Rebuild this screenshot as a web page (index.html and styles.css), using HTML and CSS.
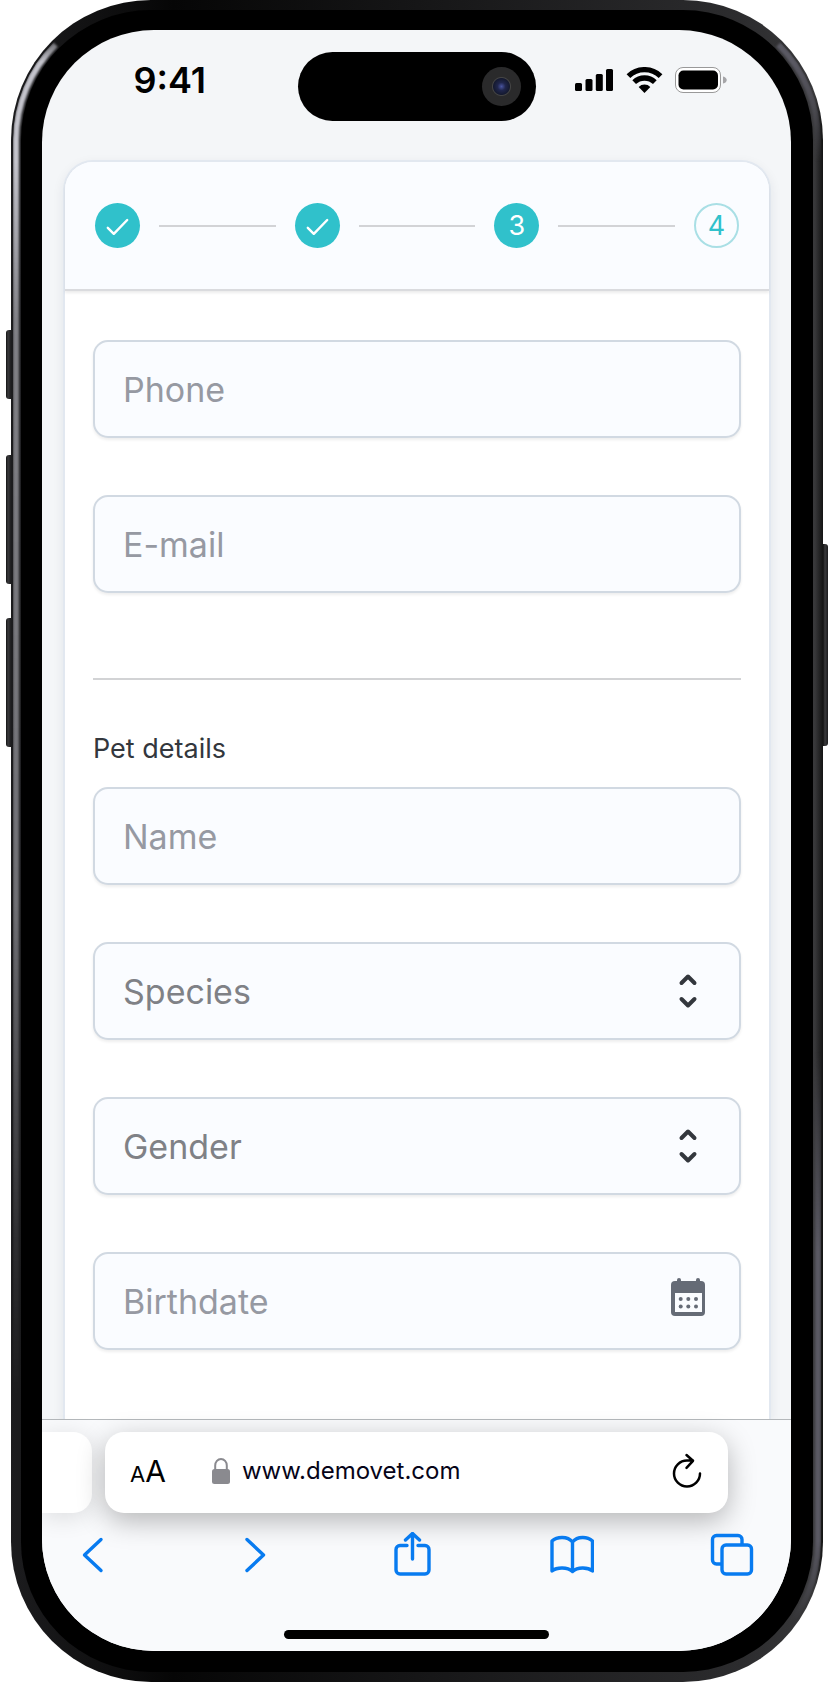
FILE: index.html
```html
<!DOCTYPE html>
<html lang="en">

<head>
  <meta charset="UTF-8">
  <meta name="viewport" content="width=device-width, initial-scale=1.0">
  <title>Demovet booking</title>
  <link rel="stylesheet" href="styles.css">
</head>

<body>
  <div class="phone">
    <span class="side-button action"></span>
    <span class="side-button volume-up"></span>
    <span class="side-button volume-down"></span>
    <span class="side-button power"></span>

    <div class="bezel">
      <div class="screen">
        <header class="status-bar">
          <div class="time">9:41</div>
          <div class="island"><span class="camera"></span></div>
          <div class="status-icons">
            <svg width="39" height="26" viewBox="0 0 39 26">
              <rect x="0" y="16" width="7" height="8" rx="1.5" />
              <rect x="10.5" y="12" width="7" height="12" rx="1.5" />
              <rect x="20.8" y="7" width="7" height="17" rx="1.5" />
              <rect x="31" y="2" width="7" height="22" rx="1.5" />
            </svg>
            <svg width="37" height="26" viewBox="639 201 111 78">
              <g fill="none" stroke="#000" stroke-width="16">
                <path d="M646.3 228.2A70 70 0 0 1 742.7 228.2" />
                <path d="M663.5 246.4A45 45 0 0 1 725.5 246.4" />
              </g>
              <path d="M694.5 279L677 261A25 25 0 0 1 712 261Z" />
            </svg>
            <svg width="52" height="26" viewBox="0 0 52 26">
              <rect x="0.5" y="0.5" width="45" height="25" rx="7.5" fill="#fff" stroke="#999" />
              <rect x="3.5" y="3.5" width="39.5" height="19" rx="5" />
              <path d="M48 9.5c5 1 5 6 0 7z" fill="#a5a5a8" />
            </svg>
          </div>
        </header>

        <main class="card">
          <ol class="steps">
            <li class="step done">
              <svg width="45" height="45" viewBox="0 0 45 45"><path d="M12.8 24.8l6 6L32.2 17" /></svg>
            </li>
            <li class="step-line"></li>
            <li class="step done">
              <svg width="45" height="45" viewBox="0 0 45 45"><path d="M12.8 24.8l6 6L32.2 17" /></svg>
            </li>
            <li class="step-line"></li>
            <li class="step done">3</li>
            <li class="step-line"></li>
            <li class="step">4</li>
          </ol>

          <form class="form">
            <div class="group">
              <input class="control" type="tel" placeholder="Phone" aria-label="Phone">
              <input class="control" type="email" placeholder="E-mail" aria-label="E-mail">
            </div>

            <hr>
            <h2>Pet details</h2>

            <div class="group">
              <input class="control" type="text" placeholder="Name" aria-label="Name">

              <div class="field">
                <select class="control" aria-label="Species">
                  <option>Species</option>
                  <option>Dog</option>
                  <option>Cat</option>
                </select>
                <svg class="field-icon chevrons" width="40" height="40" viewBox="0 0 40 40">
                  <path d="M13.5 12l6.5-6.5 6.5 6.5M13.5 28l6.5 6.5 6.5-6.5" />
                </svg>
              </div>

              <div class="field">
                <select class="control" aria-label="Gender">
                  <option>Gender</option>
                  <option>Female</option>
                  <option>Male</option>
                </select>
                <svg class="field-icon chevrons" width="40" height="40" viewBox="0 0 40 40">
                  <path d="M13.5 12l6.5-6.5 6.5 6.5M13.5 28l6.5 6.5 6.5-6.5" />
                </svg>
              </div>

              <div class="field">
                <input class="control" type="text" placeholder="Birthdate" aria-label="Birthdate">
                <svg class="field-icon" width="40" height="46" viewBox="0 0 40 46" fill="#656b76">
                  <rect x="9" y="0" width="4" height="8" rx="2" />
                  <rect x="28" y="0" width="4" height="8" rx="2" />
                  <rect x="3" y="3" width="34" height="35" rx="4" />
                  <rect x="7" y="15" width="27" height="19" fill="#fafcff" />
                  <circle cx="12.7" cy="21" r="2" />
                  <circle cx="20.3" cy="21" r="2" />
                  <circle cx="28" cy="21" r="2" />
                  <circle cx="12.7" cy="28.5" r="2" />
                  <circle cx="20.3" cy="28.5" r="2" />
                  <circle cx="28" cy="28.5" r="2" />
                </svg>
              </div>
            </div>
          </form>
        </main>

        <footer class="browser">
          <div class="tabs">
            <div class="tab-previous"></div>
            <div class="address">
              <button class="text-size" type="button"><small>A</small>A</button>
              <svg class="lock" width="18" height="26" viewBox="0 0 18 26">
                <path d="M3.2 12V7.5a5.8 6.5 0 0 1 11.6 0V12" fill="none" stroke="#8a8a8f" stroke-width="2" />
                <rect x="0" y="11" width="18" height="15" rx="2.5" fill="#8a8a8f" />
              </svg>
              <a class="url" href="#">www.demovet.com</a>
              <button class="reload" type="button" aria-label="Reload">
                <svg width="30" height="36" viewBox="0 0 30 36">
                  <path d="M28 20.5a13 13 0 1 1-13-13h6M14.5 2l6.5 5.8-6.5 7" />
                </svg>
              </button>
            </div>
          </div>

          <nav class="toolbar">
            <button type="button" aria-label="Back">
              <svg width="44" height="46" viewBox="0 0 44 46"><path d="M31 7.5L14.5 23 31 38.5" /></svg>
            </button>
            <button type="button" aria-label="Forward">
              <svg width="44" height="46" viewBox="0 0 44 46"><path d="M17 7.5L33.5 23 17 38.5" /></svg>
            </button>
            <button type="button" aria-label="Share">
              <svg width="44" height="46" viewBox="0 0 44 46">
                <path d="M17 13.5H10a4 4 0 0 0-4 4V38a4 4 0 0 0 4 4h25a4 4 0 0 0 4-4V17.5a4 4 0 0 0-4-4h-7M22.500 27V1.500M15.500 8l7-6.500 7 6.500" />
              </svg>
            </button>
            <button type="button" aria-label="Bookmarks">
              <svg width="44" height="46" viewBox="0 0 44 46">
                <path d="M22.500 10C17.500 4 7 4.500 2 9V39c5-4 15.500-4 20.500.5V10c5-6 15-5.500 20-1V39c-5-4-15-4-20 .5" />
              </svg>
            </button>
            <button type="button" aria-label="Tabs">
              <svg width="44" height="46" viewBox="0 0 44 46">
                <path d="M11 32H6.500a4 4 0 0 1-4-4V7.500a4 4 0 0 1 4-4H28a4 4 0 0 1 4 4V12" />
                <rect x="12" y="13" width="29.500" height="29" rx="4" />
              </svg>
            </button>
          </nav>
          <div class="home-indicator"></div>
        </footer>
      </div>
    </div>
  </div>
</body>

</html>
```
FILE: styles.css
```css
:root {
  --teal: #30c1cb;
  --blue: #087bf0;
  --page-bg: #f4f6f8;
  --control-bg: #fafcff;
  --control-border: #d1d9e2;
  --text-color: #33373d;
}

* {
  box-sizing: border-box;
}

body {
  margin: 0;
  background: #fff;
  color: var(--text-color);
  font-family: Inter, "Liberation Sans", sans-serif;
}

button {
  border: none;
  padding: 0;
  background: none;
  color: inherit;
  font: inherit;
  cursor: pointer;
}

svg {
  display: block;
}

/* Phone frame */
.phone {
  position: relative;
  margin: 0 11px;
  padding: 10px;
  border-radius: 140px;
  background: linear-gradient(to right, #1c1c1e, #060606 20%, #161617 50%, #2c2c2e 90%, #38383a 99%, #141414);
}

.phone::before,
.phone::after {
  content: "";
  position: absolute;
  inset: 2px;
  border: 6px solid transparent;
  border-radius: 138px;
  filter: blur(1px);
}

/* Light running down the left rim and along the lower right one */
.phone::before {
  border-left-color: #c4c4cc;
  -webkit-mask: linear-gradient(transparent 20px, #000 60px, #000 160px, rgba(0, 0, 0, 0.6) 320px, rgba(0, 0, 0, 0.5) 900px, rgba(0, 0, 0, 0.1) 1250px, transparent 1400px);
  mask: linear-gradient(transparent 20px, #000 60px, #000 160px, rgba(0, 0, 0, 0.6) 320px, rgba(0, 0, 0, 0.5) 900px, rgba(0, 0, 0, 0.1) 1250px, transparent 1400px);
}

.phone::after {
  border-right-color: #5a5963;
  -webkit-mask: linear-gradient(#000 60px, transparent 160px, transparent 1050px, #000 1250px, #000 1540px, transparent 1620px);
  mask: linear-gradient(#000 60px, transparent 160px, transparent 1050px, #000 1250px, #000 1540px, transparent 1620px);
}

.side-button {
  position: absolute;
  left: -5px;
  width: 5px;
  border-radius: 3px 0 0 3px;
  background: linear-gradient(to right, #111, #3a3a3c 40%, #1c1c1e);
}

.action {
  top: 330px;
  height: 69px;
}

.volume-up {
  top: 455px;
  height: 129px;
}

.volume-down {
  top: 618px;
  height: 129px;
}

.power {
  top: 544px;
  right: -5px;
  left: auto;
  height: 202px;
  border-radius: 0 3px 3px 0;
}

.bezel {
  position: relative;
  z-index: 1;
  padding: 20px 22px 21px 21px;
  border-radius: 130px;
  background: #000;
}

.screen {
  overflow: hidden;
  border-radius: 112px;
  background: var(--page-bg);
}

/* Status bar */
.status-bar {
  display: grid;
  grid-template-columns: 1fr auto 1fr;
  align-items: start;
  padding: 22px 0 39px;
}

.time,
.status-icons {
  display: flex;
  align-items: center;
  justify-content: center;
  height: 56px;
}

.time {
  color: #000;
  font-size: 36px;
  font-weight: 600;
}

.island {
  display: flex;
  align-items: center;
  justify-content: flex-end;
  width: 238px;
  height: 69px;
  padding-right: 15px;
  border-radius: 35px;
  background: #000;
}

.camera {
  width: 39px;
  height: 39px;
  border-radius: 50%;
  background: radial-gradient(circle, #4a55a0 0, #20264c 4px, #151a30 8px, #444 9px, #2a2a2b 10px);
}

.status-icons {
  gap: 12px;
  padding-right: 24px;
}

/* Card */
.card {
  margin: 0 20px 0 21px;
  border: 2px solid #e2e8f0;
  border-bottom: none;
  border-radius: 30px 30px 0 0;
  background: #fff;
  box-shadow: 0 4px 12px rgba(30, 40, 60, 0.08);
}

.steps {
  display: flex;
  align-items: center;
  gap: 19px;
  margin: 0;
  padding: 41px 30px;
  border-bottom: 2px solid #dadbde;
  border-radius: 28px 28px 0 0;
  background: var(--control-bg);
  box-shadow: 0 2px 3px rgba(0, 0, 0, 0.08);
  list-style: none;
}

.step {
  display: flex;
  align-items: center;
  justify-content: center;
  flex: none;
  width: 45px;
  height: 45px;
  border: 2px solid #a9dfe5;
  border-radius: 50%;
  color: var(--teal);
  font-size: 27px;
}

.step.done {
  border: none;
  background: var(--teal);
  color: #fff;
}

.step path {
  fill: none;
  stroke: #fff;
  stroke-width: 2.4;
  stroke-linecap: round;
  stroke-linejoin: round;
}

.step-line {
  flex: 1;
  height: 2px;
  background: #d2d3d6;
}

/* Form */
.form {
  padding: 49px 28px 69px;
}

.group {
  display: grid;
  gap: 57px;
}

.field {
  display: grid;
  align-items: center;
}

.field > * {
  grid-area: 1 / 1;
}

.control {
  width: 100%;
  height: 98px;
  padding: 0 28px;
  border: 2px solid var(--control-border);
  border-radius: 15px;
  background: var(--control-bg);
  box-shadow: 0 2px 3px rgba(0, 0, 0, 0.07);
  color: #7f8186;
  font-family: inherit;
  font-size: 34px;
  appearance: none;
}

.control::placeholder {
  color: #9699a2;
  opacity: 1;
}

.field-icon {
  justify-self: end;
  margin-right: 33px;
  pointer-events: none;
}

.chevrons {
  fill: none;
  stroke: #33373d;
  stroke-width: 4;
  stroke-linecap: round;
  stroke-linejoin: round;
}

hr {
  height: 2px;
  margin: 85px 0 53px;
  border: none;
  background: #d2d3d5;
}

h2 {
  margin: 0 0 22px;
  font-size: 27px;
  font-weight: 400;
  line-height: 32px;
}

/* Browser bar */
.browser {
  position: relative;
  padding-bottom: 12px;
  border-top: 1px solid #b4b8bb;
  background: #f9fafc;
}

.tabs {
  display: flex;
  gap: 13px;
  padding: 12px 63px 0 0;
}

.tab-previous,
.address {
  height: 81px;
  border-radius: 19px;
  background: #fff;
  box-shadow: 0 8px 28px rgba(0, 0, 0, 0.28);
}

.tab-previous {
  width: 50px;
  border-radius: 0 19px 19px 0;
  box-shadow: 0 4px 24px rgba(0, 0, 0, 0.12);
}

.address {
  display: flex;
  flex: 1;
  align-items: center;
  padding: 0 26px 4px 25px;
  color: #000;
}

.text-size {
  font-size: 30px;
}

.text-size small {
  font-size: 22px;
}

.lock {
  margin: 0 12px 0 46px;
}

.url {
  color: #060418;
  font-size: 24px;
  text-decoration: none;
}

.reload {
  margin-left: auto;
}

.reload path,
.toolbar svg {
  fill: none;
  stroke: #000;
  stroke-width: 2.5;
  stroke-linecap: round;
  stroke-linejoin: round;
}

.toolbar {
  display: flex;
  justify-content: space-between;
  padding: 19px 37px 0 28px;
}

.toolbar svg {
  stroke: var(--blue);
  stroke-width: 3.4;
}

.home-indicator {
  width: 265px;
  height: 9px;
  margin: 52px auto 0;
  border-radius: 5px;
  background: #000;
}
```
